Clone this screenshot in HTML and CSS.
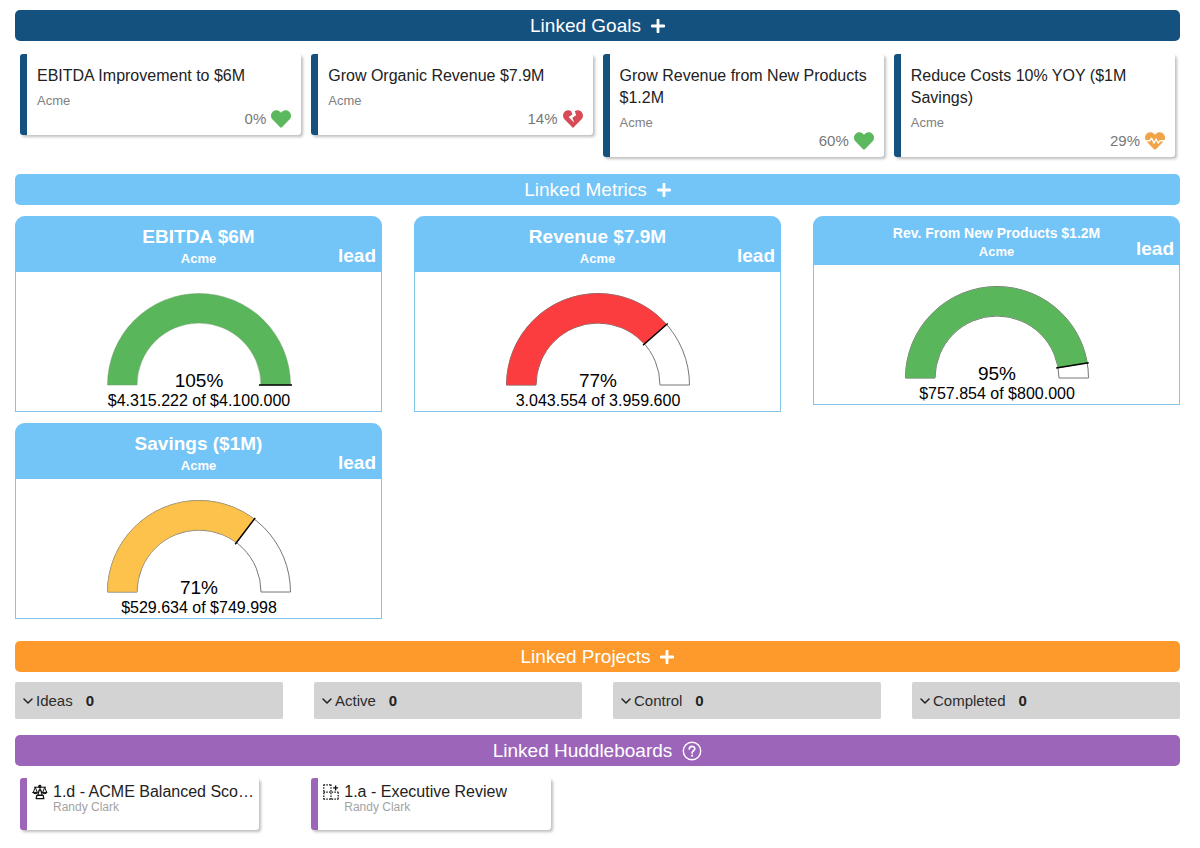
FILE: index.html
```html
<!DOCTYPE html>
<html lang="en">
<head>
<meta charset="utf-8">
<meta name="viewport" content="width=device-width, initial-scale=1">
<title>Linked Items</title>
<link rel="stylesheet" href="styles.css">
</head>
<body>
<svg class="defs" aria-hidden="true">
  <symbol id="plus" viewBox="0 0 14 14"><path d="M7 1v12M1 7h12" fill="none" stroke="currentColor" stroke-width="2.8" stroke-linecap="round"/></symbol>
  <symbol id="chevron" viewBox="0 0 10 8"><path d="M1 2l4 4 4-4" fill="none" stroke="currentColor" stroke-width="1.5" stroke-linecap="round" stroke-linejoin="round"/></symbol>
  <symbol id="heart" viewBox="0 0 512 512"><path fill="currentColor" d="M462.3 62.6C407.5 15.9 326 24.3 275.7 76.2L256 96.5l-19.7-20.3C186.1 24.3 104.5 15.9 49.7 62.6c-62.8 53.6-66.1 149.8-9.9 207.9l193.5 199.8c12.5 12.9 32.8 12.9 45.3 0l193.5-199.8c56.3-58.1 53-154.3-9.8-207.9z"/></symbol>
  <symbol id="heart-broken" viewBox="0 0 512 512"><path fill="currentColor" d="M473.7 73.8l-2.4-2.5c-46-47-118-51.7-169.6-14.8L336 159.9l-96 64 48 128-144-144 96-64-28.6-86.5C159.7 19.6 87 24 40.7 71.4l-2.4 2.4C-10.4 123.6-12.5 202.9 31 256l212.1 218.6c7.1 7.3 18.6 7.3 25.7 0L481 255.9c43.5-53 41.4-132.3-7.3-182.1z"/></symbol>
  <symbol id="heart-beat" viewBox="0 0 512 512"><use href="#heart"/><path d="M0 250h120l50-66 60 130 52-110 56 110 40-64h134" fill="none" stroke="#fff" stroke-width="34" stroke-linejoin="round"/></symbol>
</svg>

<main class="page">
  <section class="section">
    <header class="bar bar-goals"><h2 class="bar-title">Linked Goals</h2><button class="bar-button" type="button" aria-label="Add goal"><svg class="plus"><use href="#plus"/></svg></button></header>
    <div class="goals">
      <article class="card goal">
        <h3 class="goal-title">EBITDA Improvement to $6M</h3>
        <p class="goal-owner">Acme</p>
        <p class="goal-status">0% <svg class="heart green"><use href="#heart"/></svg></p>
      </article>
      <article class="card goal">
        <h3 class="goal-title">Grow Organic Revenue $7.9M</h3>
        <p class="goal-owner">Acme</p>
        <p class="goal-status">14% <svg class="heart red"><use href="#heart-broken"/></svg></p>
      </article>
      <article class="card goal">
        <h3 class="goal-title">Grow Revenue from New Products $1.2M</h3>
        <p class="goal-owner">Acme</p>
        <p class="goal-status">60% <svg class="heart green"><use href="#heart"/></svg></p>
      </article>
      <article class="card goal">
        <h3 class="goal-title">Reduce Costs 10% YOY ($1M Savings)</h3>
        <p class="goal-owner">Acme</p>
        <p class="goal-status">29% <svg class="heart amber"><use href="#heart-beat"/></svg></p>
      </article>
    </div>
  </section>

  <section class="section">
    <header class="bar bar-metrics"><h2 class="bar-title">Linked Metrics</h2><button class="bar-button" type="button" aria-label="Add metric"><svg class="plus"><use href="#plus"/></svg></button></header>
    <div class="metrics">
      <article class="metric">
        <header class="metric-head">
          <div class="metric-name"><h3 class="metric-title">EBITDA $6M</h3><p class="metric-owner">Acme</p></div>
          <span class="metric-kind">lead</span>
        </header>
        <svg class="gauge" viewBox="0 0 190 121">
          <path class="fill-green" d="M3.5 95A91.5 91.5 0 0 1 186.5 95H157A62 62 0 0 0 33 95Z"/>
          <path class="needle" d="M155 95H188"/>
          <text class="gauge-percent" x="95" y="97">105%</text>
          <text class="gauge-value" x="95" y="116">$4.315.222 of $4.100.000</text>
        </svg>
      </article>
      <article class="metric">
        <header class="metric-head">
          <div class="metric-name"><h3 class="metric-title">Revenue $7.9M</h3><p class="metric-owner">Acme</p></div>
          <span class="metric-kind">lead</span>
        </header>
        <svg class="gauge" viewBox="0 0 190 121">
          <path class="track" d="M3.5 95A91.5 91.5 0 0 1 186.5 95H157A62 62 0 0 0 33 95Z"/>
          <path class="fill-red" d="M3.5 95A91.5 91.5 0 0 1 163.6 34.5L141.5 54A62 62 0 0 0 33 95Z"/>
          <path class="needle" d="M140 55.3L164.7 33.5"/>
          <text class="gauge-percent" x="95" y="97">77%</text>
          <text class="gauge-value" x="95" y="116">3.043.554 of 3.959.600</text>
        </svg>
      </article>
      <article class="metric">
        <header class="metric-head">
          <div class="metric-name"><h3 class="metric-title metric-title-small">Rev. From New Products $1.2M</h3><p class="metric-owner">Acme</p></div>
          <span class="metric-kind">lead</span>
        </header>
        <svg class="gauge" viewBox="0 0 190 121">
          <path class="track" d="M3.5 95A91.5 91.5 0 0 1 186.5 95H157A62 62 0 0 0 33 95Z"/>
          <path class="fill-green" d="M3.5 95A91.5 91.5 0 0 1 185.2 79.9L156.2 84.8A62 62 0 0 0 33 95Z"/>
          <path class="needle" d="M154.2 85.1L186.7 79.7"/>
          <text class="gauge-percent" x="95" y="97">95%</text>
          <text class="gauge-value" x="95" y="116">$757.854 of $800.000</text>
        </svg>
      </article>
      <article class="metric">
        <header class="metric-head">
          <div class="metric-name"><h3 class="metric-title">Savings ($1M)</h3><p class="metric-owner">Acme</p></div>
          <span class="metric-kind">lead</span>
        </header>
        <svg class="gauge" viewBox="0 0 190 121">
          <path class="track" d="M3.5 95A91.5 91.5 0 0 1 186.5 95H157A62 62 0 0 0 33 95Z"/>
          <path class="fill-amber" d="M3.5 95A91.5 91.5 0 0 1 150.3 22.1L132.4 45.6A62 62 0 0 0 33 95Z"/>
          <path class="needle" d="M131.2 47.2L151.2 20.9"/>
          <text class="gauge-percent" x="95" y="97">71%</text>
          <text class="gauge-value" x="95" y="116">$529.634 of $749.998</text>
        </svg>
      </article>
    </div>
  </section>

  <section class="section">
    <header class="bar bar-projects"><h2 class="bar-title">Linked Projects</h2><button class="bar-button" type="button" aria-label="Add project"><svg class="plus"><use href="#plus"/></svg></button></header>
    <div class="projects">
      <button class="stage" type="button"><svg class="chevron"><use href="#chevron"/></svg>Ideas<b class="stage-count">0</b></button>
      <button class="stage" type="button"><svg class="chevron"><use href="#chevron"/></svg>Active<b class="stage-count">0</b></button>
      <button class="stage" type="button"><svg class="chevron"><use href="#chevron"/></svg>Control<b class="stage-count">0</b></button>
      <button class="stage" type="button"><svg class="chevron"><use href="#chevron"/></svg>Completed<b class="stage-count">0</b></button>
    </div>
  </section>

  <section class="section">
    <header class="bar bar-boards"><h2 class="bar-title">Linked Huddleboards</h2><button class="bar-button" type="button" aria-label="Help"><svg class="help" viewBox="0 0 20 20" fill="none" stroke="currentColor" stroke-linecap="round"><circle cx="10" cy="10" r="8.7" stroke-width="1.4"/><path d="M7.3 8C7.3 4.5 12.8 4.6 12.8 7.8 12.8 9.8 10.1 9.8 10.1 12" stroke-width="1.7"/><path d="M10.1 14.6v.2" stroke-width="2"/></svg></button></header>
    <div class="boards">
      <article class="card board">
        <svg class="board-icon" viewBox="0 0 16 16" fill="none" stroke="currentColor" stroke-width="1" stroke-linecap="round" stroke-linejoin="round">
          <path d="M2.5 3.2h11M8 1.3v4.500M3.300 3.400L1.400 8M3.300 3.400L5.200 8M12.700 3.400L10.800 8M12.700 3.400L14.600 8"/>
          <path fill="currentColor" d="M1 8.400h4.600q-.5 1.300-2.300 1.300T1 8.400zM10.400 8.400H15q-.5 1.300-2.300 1.300t-2.300-1.300zM7.200 1.400h1.600v2H7.200z"/>
          <path stroke-width="1.300" d="M7.200 6h1.600l1.400 5.200H5.800zM4.800 11.400h6.400l.6 3.200H4.200z"/>
        </svg>
        <div class="board-text"><h3 class="board-title">1.d - ACME Balanced Sco…</h3><p class="board-owner">Randy Clark</p></div>
      </article>
      <article class="card board">
        <svg class="board-icon" viewBox="0 0 16 16" fill="none" stroke="currentColor" stroke-width="1.2">
          <path stroke-dasharray="1.5 1.2" d="M.6.8h7.400M.6 8.200h14.800M.6 15.200h14.800M.8.600v14.800M8 .6v14.800M15.200 8.200v7.200"/><path stroke-width="1.400" d="M12.600 1.400v5M10.100 3.900h5"/>
        </svg>
        <div class="board-text"><h3 class="board-title">1.a - Executive Review</h3><p class="board-owner">Randy Clark</p></div>
      </article>
    </div>
  </section>
</main>
</body>
</html>
```

FILE: styles.css
```css
* { box-sizing: border-box; }

body {
  margin: 0;
  background: #fff;
  color: #222;
  font-family: "Liberation Sans", Arial, Helvetica, sans-serif;
}

h2, h3, p { margin: 0; font-weight: 400; }

button {
  border: 0;
  color: inherit;
  font-family: inherit;
  cursor: pointer;
}

.defs { display: none; }

.page { padding: 10px 20px 18px 15px; }

/* Section bars */
.bar {
  display: flex;
  align-items: center;
  justify-content: center;
  gap: 10px;
  height: 31px;
  border-radius: 5px;
  color: #fff;
}
.bar-goals { background: #15517f; }
.bar-metrics { background: #73c4f7; }
.bar-projects { background: #fd9a2b; }
.bar-boards { background: #9d65ba; }
.bar-title { font-size: 19px; line-height: 24px; }
.bar-button { display: flex; padding: 0; background: none; }
.plus { width: 14px; height: 14px; }
.help { width: 20px; height: 20px; }

/* Goals */
.goals, .boards {
  display: grid;
  grid-template-columns: repeat(4, minmax(0, 1fr));
  align-items: start;
  gap: 10px;
}
.goals { padding: 13px 5px 17px; }
.card {
  border-left: 7px solid #15517f;
  border-radius: 3px;
  background: #fff;
  box-shadow: 2px 2px 3px rgba(0, 0, 0, 0.26);
}
.goal { padding: 11px 10px 6px; }
.goal-title { font-size: 16px; line-height: 22px; }
.goal-owner {
  margin-top: 5px;
  color: #808080;
  font-size: 13px;
  line-height: 17px;
}
.goal-status {
  display: flex;
  align-items: center;
  justify-content: flex-end;
  gap: 5px;
  color: #777;
  font-size: 15px;
  line-height: 20px;
}
.heart { width: 20px; height: 20px; }
.green { color: #5cb85c; }
.red { color: #d64b55; }
.amber { color: #f0a347; }

/* Metrics */
.metrics {
  display: grid;
  grid-template-columns: repeat(3, 1fr);
  align-items: start;
  gap: 11px 32px;
  padding: 11px 0 22px;
}
.metric {
  border: 1px solid #82c5e8;
  border-top: 0;
  border-radius: 10px 10px 0 0;
}
.metric-head {
  display: grid;
  grid-template-columns: 1fr auto 1fr;
  margin: 0 -1px;
  padding: 9px 6px 5px;
  border-radius: 10px 10px 0 0;
  background: #73c4f7;
  color: #fff;
  font-weight: 700;
}
.metric-name { grid-column: 2; text-align: center; }
.metric-title { font-size: 19px; font-weight: 700; line-height: 23px; }
.metric-title-small { font-size: 14px; line-height: 16px; }
.metric-owner {
  margin-top: 2px;
  font-size: 13px;
  font-weight: 700;
  line-height: 17px;
}
.metric-kind {
  align-self: end;
  justify-self: end;
  font-size: 19px;
  line-height: 22px;
}
.gauge {
  display: block;
  width: 190px;
  height: 121px;
  margin: 18px auto 0;
}
.track { fill: #fff; stroke: #777; }
.fill-green { fill: #5ab65a; stroke: #6d9a6d; stroke-width: 0.5; }
.fill-red { fill: #fc3d3f; stroke: #b05a5a; stroke-width: 0.5; }
.fill-amber { fill: #fcc24c; stroke: #a59670; stroke-width: 0.5; }
.needle { stroke: #000; stroke-width: 1.5; }
.gauge-percent, .gauge-value { fill: #000; text-anchor: middle; }
.gauge-percent { font-size: 19px; }
.gauge-value { font-size: 16px; }

/* Projects */
.projects {
  display: grid;
  grid-template-columns: repeat(4, 1fr);
  gap: 31px;
  padding: 10px 0 16px;
}
.stage {
  display: flex;
  align-items: center;
  height: 37px;
  padding: 0 8px;
  border-radius: 2px;
  background: #d3d3d3;
  color: #2b2b2b;
  font-size: 15px;
}
.chevron { width: 10px; height: 8px; margin-right: 3px; color: #222; }
.stage-count { margin-left: 13px; color: #222; }

/* Huddleboards */
.boards { padding: 12px 5px 0; }
.board {
  display: flex;
  align-items: flex-start;
  gap: 5px;
  min-height: 52px;
  margin-right: 42px;
  padding: 5px 3px 5px 5px;
  border-left-color: #9d65ba;
}
.board-icon { flex: none; width: 16px; height: 16px; margin-top: 1px; color: #111; }
.board-text { min-width: 0; }
.board-title {
  overflow: hidden;
  font-size: 16px;
  line-height: 18px;
  text-overflow: ellipsis;
  white-space: nowrap;
}
.board-owner { color: #a3a3a3; font-size: 12px; line-height: 13px; }
```
